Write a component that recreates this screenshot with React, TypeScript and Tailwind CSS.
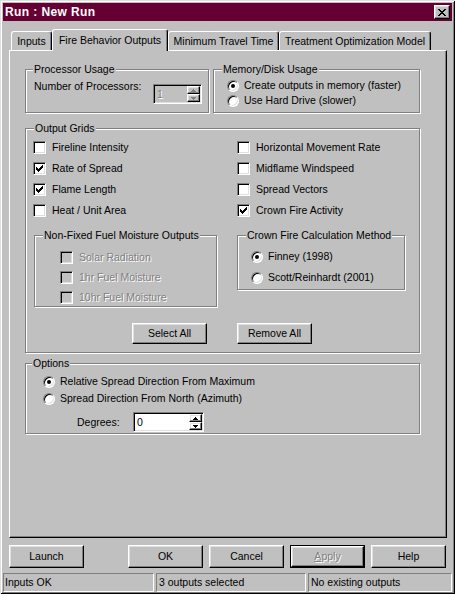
import React from "react";

const raised =
  "border border-t-white border-l-white border-r-black border-b-black shadow-[inset_-1px_-1px_#808080,inset_1px_1px_#dfdfdf]";
const sunken =
  "border border-t-[#808080] border-l-[#808080] border-r-white border-b-white shadow-[inset_1px_1px_#000,inset_-1px_-1px_#dfdfdf]";
const etched = "border border-[#808080] shadow-[inset_1px_1px_#fff,1px_1px_#fff]";
const disabledText = "text-[#808080] [text-shadow:1px_1px_0_#fff]";

function Pixels({ rows, color }: { rows: string[]; color: string }) {
  const w = rows[0].length;
  const h = rows.length;
  return (
    <svg width={w} height={h} viewBox={`0 0 ${w} ${h}`} shapeRendering="crispEdges" className="block">
      {rows.flatMap((r, y) =>
        r.split("").map((c, x) =>
          c === "X" ? <rect key={`${x}-${y}`} x={x} y={y} width={1} height={1} fill={color} /> : null
        )
      )}
    </svg>
  );
}

const CHECK = ["......X", ".....XX", "X...XXX", "XX.XXX.", "XXXXX..", ".XXX...", "..X...."];
const CLOSE = ["XX....XX", ".XX..XX.", "..XXXX..", "...XX...", "..XXXX..", ".XX..XX.", "XX....XX"];
const UP = ["..X..", ".XXX.", "XXXXX"];
const DOWN = ["XXXXX", ".XXX.", "..X.."];

function CheckBox({ checked, disabled }: { checked?: boolean; disabled?: boolean }) {
  return (
    <span
      className={`w-[13px] h-[13px] shrink-0 flex items-center justify-center ${sunken} ${
        disabled ? "bg-[#c0c0c0]" : "bg-white"
      }`}
    >
      {checked && <Pixels rows={CHECK} color="#000" />}
    </span>
  );
}

function Radio({ checked }: { checked?: boolean }) {
  return (
    <span className="w-[12px] h-[12px] shrink-0 rounded-full flex items-center justify-center bg-white border border-t-[#808080] border-l-[#808080] border-r-white border-b-white shadow-[inset_1px_1px_#000,inset_-1px_-1px_#dfdfdf]">
      {checked && <span className="w-[4px] h-[4px] rounded-full bg-black" />}
    </span>
  );
}

function CheckRow({ label, checked, disabled, h }: { label: string; checked?: boolean; disabled?: boolean; h: string }) {
  return (
    <div className={`flex items-center gap-[6px] ${h}`}>
      <CheckBox checked={checked} disabled={disabled} />
      <span className={`whitespace-nowrap leading-none ${disabled ? disabledText : ""}`}>{label}</span>
    </div>
  );
}

function RadioRow({ label, checked, h }: { label: string; checked?: boolean; h: string }) {
  return (
    <div className={`flex items-center gap-[5px] ${h}`}>
      <Radio checked={checked} />
      <span className="whitespace-nowrap leading-none">{label}</span>
    </div>
  );
}

function Group({
  label,
  labelPos,
  className,
  children,
}: {
  label: string;
  labelPos: string;
  className: string;
  children?: React.ReactNode;
}) {
  return (
    <div className={`relative shrink-0 ${etched} ${className}`}>
      <span className={`absolute -top-[8px] ${labelPos} bg-[#c0c0c0] px-[1px] leading-[14px] whitespace-nowrap`}>
        {label}
      </span>
      {children}
    </div>
  );
}

function SpinButtons({ disabled }: { disabled?: boolean }) {
  const color = disabled ? "#808080" : "#000";
  return (
    <div className="flex flex-col w-[13px] h-full shrink-0">
      <div className={`flex-1 flex items-center justify-center ${raised}`}>
        <Pixels rows={UP} color={color} />
      </div>
      <div className={`flex-1 flex items-center justify-center ${raised}`}>
        <Pixels rows={DOWN} color={color} />
      </div>
    </div>
  );
}

function Button({ label, className }: { label: React.ReactNode; className: string }) {
  return <div className={`flex items-center justify-center shrink-0 ${raised} ${className}`}>{label}</div>;
}

const tabBase =
  "flex items-center justify-center whitespace-nowrap shrink-0 border-t border-l border-r border-t-white border-l-white border-r-black shadow-[inset_-1px_0_#808080] rounded-t-[3px] bg-[#c0c0c0] leading-none";

export default function App() {
  return (
    <div className="w-[455px] h-[594px] bg-[#c0c0c0] pt-[3px] px-[3px] pb-[2px] flex flex-col text-[10.5px] text-black font-['Liberation_Sans',Arial,sans-serif] shadow-[inset_1px_1px_#dfdfdf,inset_-1px_-1px_#000,inset_2px_2px_#fff,inset_-2px_-2px_#808080] overflow-hidden">
      {/* Title bar */}
      <div className="h-[18px] shrink-0 bg-[#660033] flex items-center justify-between pl-[2px] pr-[2px]">
        <span className="text-white font-bold text-[12px] tracking-[0.4px] leading-none">Run : New Run</span>
        <div className={`w-[16px] h-[14px] flex items-center justify-center bg-[#c0c0c0] ${raised}`}>
          <Pixels rows={CLOSE} color="#000" />
        </div>
      </div>

      <div className="px-[6px] flex flex-col">
        {/* Tabs */}
        <div className="mt-[8px] h-[21px] flex items-end">
          <div className={`${tabBase} ml-[2px] w-[41px] h-[19px]`}>Inputs</div>
          <div className={`${tabBase} relative z-10 w-[116px] h-[22px] -mb-[1px]`}>Fire Behavior Outputs</div>
          <div className={`${tabBase} w-[111px] h-[19px]`}>Minimum Travel Time</div>
          <div className={`${tabBase} w-[152px] h-[19px]`}>Treatment Optimization Model</div>
        </div>

        {/* Panel */}
        <div className="h-[488px] w-[438px] border border-t-white border-l-white border-r-black border-b-black shadow-[inset_-1px_-1px_#808080] pl-[15px] pt-[18px] flex flex-col">
          {/* Row 1 */}
          <div className="flex">
            <Group label="Processor Usage" labelPos="left-[7px]" className="w-[184px] h-[44px]">
              <div className="flex items-start pl-[8px] pt-[10px]">
                <span className="w-[119px] h-[13px] leading-[13px] whitespace-nowrap">Number of Processors:</span>
                <div className={`mt-[4px] w-[49px] h-[20px] bg-[#c0c0c0] flex items-stretch p-[1px] ${sunken}`}>
                  <span className={`flex-1 pl-[2px] flex items-center leading-none ${disabledText}`}>1</span>
                  <SpinButtons disabled />
                </div>
              </div>
            </Group>
            <Group label="Memory/Disk Usage" labelPos="left-[8px]" className="ml-[4px] w-[207px] h-[44px]">
              <div className="flex flex-col pl-[13px] pt-[8px]">
                <RadioRow label="Create outputs in memory (faster)" checked h="h-[15px]" />
                <RadioRow label="Use Hard Drive (slower)" h="h-[15px]" />
              </div>
            </Group>
          </div>

          {/* Output Grids */}
          <Group label="Output Grids" labelPos="left-[8px]" className="mt-[15px] w-[395px] h-[225px]">
            <div className="flex flex-col pl-[7px] pt-[8px]">
              <div className="flex">
                <div className="w-[204px] flex flex-col">
                  <CheckRow label="Fireline Intensity" h="h-[21px]" />
                  <CheckRow label="Rate of Spread" checked h="h-[21px]" />
                  <CheckRow label="Flame Length" checked h="h-[21px]" />
                  <CheckRow label="Heat / Unit Area" h="h-[21px]" />
                </div>
                <div className="flex flex-col">
                  <CheckRow label="Horizontal Movement Rate" h="h-[21px]" />
                  <CheckRow label="Midflame Windspeed" h="h-[21px]" />
                  <CheckRow label="Spread Vectors" h="h-[21px]" />
                  <CheckRow label="Crown Fire Activity" checked h="h-[21px]" />
                </div>
              </div>

              <div className="flex items-start mt-[14px]">
                <Group label="Non-Fixed Fuel Moisture Outputs" labelPos="left-[8px]" className="ml-[1px] w-[183px] h-[72px]">
                  <div className="flex flex-col pl-[25px] pt-[11px]">
                    <CheckRow label="Solar Radiation" disabled h="h-[20px]" />
                    <CheckRow label="1hr Fuel Moisture" disabled h="h-[20px]" />
                    <CheckRow label="10hr Fuel Moisture" disabled h="h-[20px]" />
                  </div>
                </Group>
                <Group label="Crown Fire Calculation Method" labelPos="left-[8px]" className="ml-[20px] w-[168px] h-[55px]">
                  <div className="flex flex-col pl-[13px] pt-[10px]">
                    <RadioRow label="Finney (1998)" checked h="h-[21px]" />
                    <RadioRow label="Scott/Reinhardt (2001)" h="h-[21px]" />
                  </div>
                </Group>
              </div>

              <div className="flex mt-[16px]">
                <Button label="Select All" className="ml-[99px] w-[75px] h-[21px]" />
                <Button label="Remove All" className="ml-[30px] w-[75px] h-[21px]" />
              </div>
            </div>
          </Group>

          {/* Options */}
          <Group label="Options" labelPos="left-[6px]" className="mt-[10px] w-[395px] h-[71px]">
            <div className="flex flex-col pl-[17px] pt-[9px]">
              <RadioRow label="Relative Spread Direction From Maximum" checked h="h-[17px]" />
              <RadioRow label="Spread Direction From North (Azimuth)" h="h-[17px]" />
              <div className="flex items-center h-[20px] mt-[5px] pl-[34px]">
                <span className="w-[56px] leading-none">Degrees:</span>
                <div className={`w-[71px] h-[20px] bg-white flex items-stretch p-[1px] ${sunken}`}>
                  <span className="flex-1 pl-[2px] flex items-center leading-none">0</span>
                  <SpinButtons />
                </div>
              </div>
            </div>
          </Group>
        </div>

        {/* Bottom buttons */}
        <div className="mt-[7px] h-[23px] flex">
          <Button label="Launch" className="w-[75px] h-[23px]" />
          <Button label="OK" className="ml-[44px] w-[75px] h-[23px]" />
          <Button label="Cancel" className="ml-[6px] w-[75px] h-[23px]" />
          <div className="ml-[6px] w-[75px] h-[23px] border border-black flex shrink-0">
            <div className={`flex-1 flex items-center justify-center ${raised} ${disabledText}`}>
              <span>
                <span className="underline">A</span>pply
              </span>
            </div>
          </div>
          <Button label="Help" className="ml-[6px] w-[75px] h-[23px]" />
        </div>
      </div>

      {/* Status bar */}
      <div className="mt-[5px] h-[19px] flex shrink-0">
        <div className="w-[151px] border border-t-[#808080] border-l-[#808080] border-r-white border-b-white pl-[1px] flex items-center leading-none whitespace-nowrap">
          Inputs OK
        </div>
        <div className="ml-[2px] w-[150px] border border-t-[#808080] border-l-[#808080] border-r-white border-b-white pl-[2px] flex items-center leading-none whitespace-nowrap">
          3 outputs selected
        </div>
        <div className="ml-[2px] flex-1 border border-t-[#808080] border-l-[#808080] border-r-white border-b-white pl-[2px] flex items-center leading-none whitespace-nowrap">
          No existing outputs
        </div>
      </div>
    </div>
  );
}
